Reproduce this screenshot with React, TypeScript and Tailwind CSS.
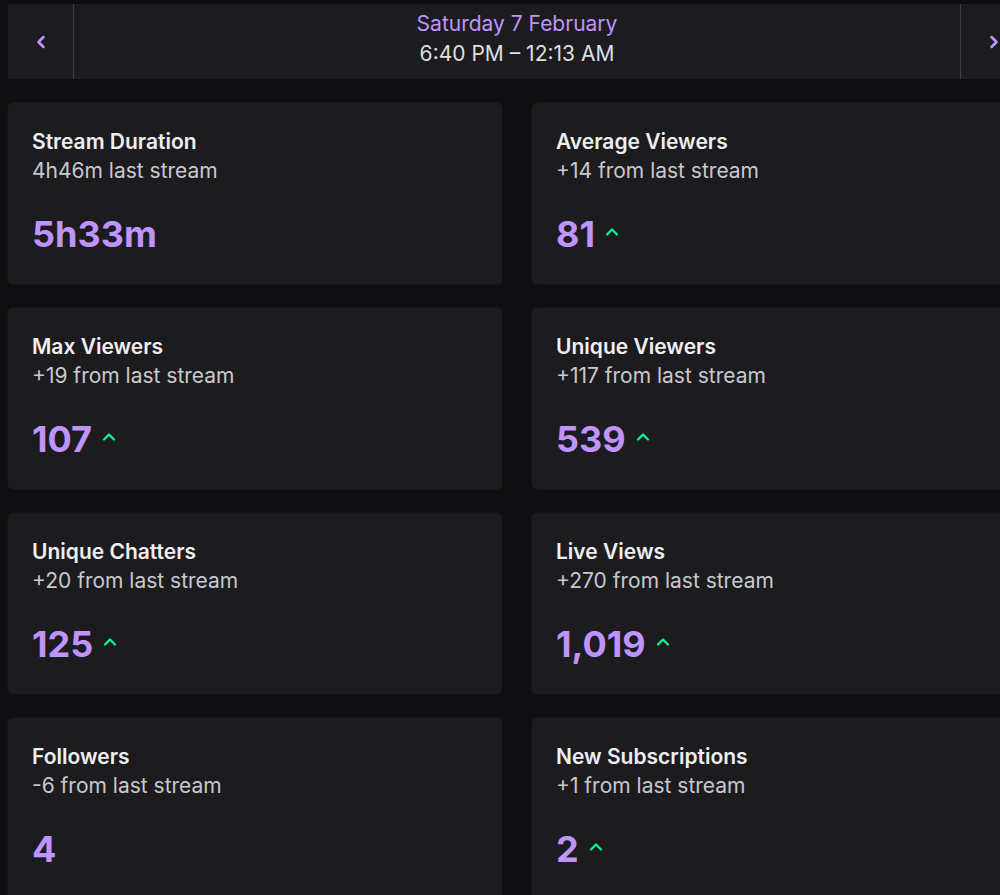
import React from 'react';
import { ChevronLeft, ChevronRight, ChevronUp } from 'lucide-react';

type Stat = {
    title: string;
    sub: string;
    value: string;
    up?: boolean;
};

const stats: Stat[] = [
    { title: 'Stream Duration', sub: '4h46m last stream', value: '5h33m' },
    { title: 'Average Viewers', sub: '+14 from last stream', value: '81', up: true },
    { title: 'Max Viewers', sub: '+19 from last stream', value: '107', up: true },
    { title: 'Unique Viewers', sub: '+117 from last stream', value: '539', up: true },
    { title: 'Unique Chatters', sub: '+20 from last stream', value: '125', up: true },
    { title: 'Live Views', sub: '+270 from last stream', value: '1,019', up: true },
    { title: 'Followers', sub: '-6 from last stream', value: '4' },
    { title: 'New Subscriptions', sub: '+1 from last stream', value: '2', up: true },
];

const StatCard: React.FC<{ stat: Stat }> = ({ stat }) => (
    <div className="h-[181px] rounded-[5px] bg-[#1c1c1f] px-6 pt-6 shadow-[0_0_0_1px_#141416]">
        <div className="text-[21px] leading-[29px] font-semibold text-[#efeff1]">{stat.title}</div>
        <div className="text-[21px] leading-[29px] text-[#c8c8cf]">{stat.sub}</div>
        <div className="mt-[29px] flex items-center h-10">
            <span className="text-[36px] leading-10 font-bold text-[#bf94ff]">{stat.value}</span>
            {stat.up && (
                <ChevronUp className="ml-[7px] mb-1 h-5 w-5 text-[#00f593]" strokeWidth={2.75} />
            )}
        </div>
    </div>
);

const App: React.FC = () => {
    return (
        <div className="w-[1000px] h-[895px] overflow-hidden bg-[#0f0f11] font-['Inter',sans-serif]">
            <div className="w-[1018px] ml-2 pt-1">
                <div className="flex h-[75px] bg-[#1c1c1f]">
                    <button className="w-[66px] flex items-center justify-center border-r border-[#3d3d42]">
                        <ChevronLeft className="h-5 w-5 text-[#bf94ff]" strokeWidth={3} />
                    </button>
                    <div className="flex-1 flex flex-col items-center pt-[5px]">
                        <div className="text-[21px] leading-[30px] text-[#bf94ff]">Saturday 7 February</div>
                        <div className="text-[21px] leading-[30px] text-[#dedee3]">6:40 PM – 12:13 AM</div>
                    </div>
                    <button className="w-[66px] flex items-center justify-center border-l border-[#3d3d42]">
                        <ChevronRight className="h-5 w-5 text-[#bf94ff]" strokeWidth={3} />
                    </button>
                </div>
                <div className="mt-6 grid grid-cols-2 gap-x-[30px] gap-y-6">
                    {stats.map((s) => (
                        <StatCard key={s.title} stat={s} />
                    ))}
                </div>
            </div>
        </div>
    );
};

export default App;
